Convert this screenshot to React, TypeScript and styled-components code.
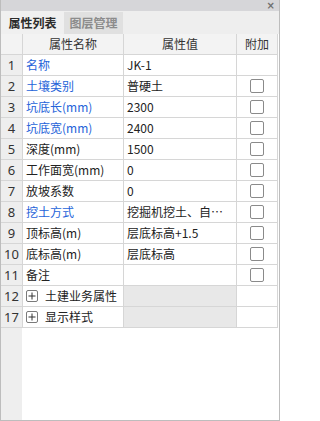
import React from "react";
import styled, { createGlobalStyle } from "styled-components";

const Global = createGlobalStyle`
  html, body { margin: 0; padding: 0; background: #ffffff; }
  body { font-family: "Noto Sans CJK SC", "Noto Sans", sans-serif; }
  * { box-sizing: border-box; }
`;

const Panel = styled.div`
  width: 280px;
  height: 421px;
  display: flex;
  flex-direction: column;
  background: #ffffff;
  border-left: 1px solid #bdbdbd;
  border-right: 1px solid #bdbdbd;
  border-bottom: 1px solid #bdbdbd;
  font-family: "Noto Sans CJK SC", "Noto Sans", sans-serif;
  font-size: 12px;
  overflow: hidden;
`;

const TitleBar = styled.div`
  height: 11px;
  flex: none;
  background: #d6d6d9;
  margin: 0 -1px;
  display: flex;
  justify-content: flex-end;
  align-items: center;
  padding-right: 5px;
`;

const Close = styled.span`
  font-family: "DejaVu Sans", sans-serif;
  font-size: 10px;
  line-height: 11px;
  color: #6f6f6f;
  font-weight: bold;
`;

const TabStrip = styled.div`
  height: 23px;
  flex: none;
  background: #eeeeee;
  display: flex;
  align-items: flex-end;
`;

const Tab = styled.div<{ $active?: boolean }>`
  height: ${(p) => (p.$active ? "23px" : "22px")};
  width: ${(p) => (p.$active ? "63px" : "59px")};
  display: flex;
  align-items: center;
  justify-content: center;
  font-size: 12px;
  font-weight: 600;
  line-height: 16px;
  color: ${(p) => (p.$active ? "#2b2b2b" : "#8c8c8c")};
  background: ${(p) => (p.$active ? "#f0f0f0" : "#e0e0e0")};
`;

const Grid = styled.div`
  flex: 1;
  display: grid;
  grid-template-columns: 22px 101px 113px 41px;
  grid-auto-rows: 21px;
  align-content: start;
  background: linear-gradient(to right, #eeeeee 0 21px, #ffffff 21px);
`;

const Cell = styled.div<{ $bg?: string; $center?: boolean; $color?: string }>`
  border-right: 1px solid #d6d6d6;
  border-bottom: 1px solid #d6d6d6;
  background: ${(p) => p.$bg || "#ffffff"};
  display: flex;
  align-items: center;
  justify-content: ${(p) => (p.$center ? "center" : "flex-start")};
  padding: ${(p) => (p.$center ? "0" : "0 3px")};
  color: ${(p) => p.$color || "#222222"};
  font-size: 12px;
  line-height: 16px;
  white-space: nowrap;
  min-width: 0;
`;

const HeadCell = styled(Cell)`
  background: #f3f3f3;
  color: #333333;
  justify-content: center;
`;

const NumCell = styled(Cell)`
  background: #eeeeee;
  color: #333333;
  justify-content: center;
  padding: 0;
  font-family: "Noto Sans", "Noto Sans CJK SC", sans-serif;
  font-size: 13px;
`;

const ValueText = styled.span`
  flex: 1;
  min-width: 0;
  overflow: hidden;
  text-overflow: ellipsis;
  white-space: nowrap;
`;

const Check = styled.span`
  width: 14px;
  height: 14px;
  border: 1px solid #8a8a8a;
  border-radius: 2px;
  background: #ffffff;
`;

const Expand = styled.span`
  width: 12px;
  height: 12px;
  border: 1px solid #7a7a7a;
  border-radius: 2px;
  display: flex;
  align-items: center;
  justify-content: center;
  margin-right: 7px;
  flex: none;
`;

const PlusIcon = () => (
  <svg width="8" height="8" viewBox="0 0 8 8">
    <path d="M0.5 4H7.5M4 0.5V7.5" stroke="#333" strokeWidth="1" />
  </svg>
);

type Row = {
  n: string;
  name: string;
  value: string;
  blue?: boolean;
  check?: boolean;
  group?: boolean;
};

const rows: Row[] = [
  { n: "1", name: "名称", value: "JK-1", blue: true },
  { n: "2", name: "土壤类别", value: "普硬土", blue: true, check: true },
  { n: "3", name: "坑底长(mm)", value: "2300", blue: true, check: true },
  { n: "4", name: "坑底宽(mm)", value: "2400", blue: true, check: true },
  { n: "5", name: "深度(mm)", value: "1500", check: true },
  { n: "6", name: "工作面宽(mm)", value: "0", check: true },
  { n: "7", name: "放坡系数", value: "0", check: true },
  { n: "8", name: "挖土方式", value: "挖掘机挖土、自卸汽车运土", blue: true, check: true },
  { n: "9", name: "顶标高(m)", value: "层底标高+1.5", check: true },
  { n: "10", name: "底标高(m)", value: "层底标高", check: true },
  { n: "11", name: "备注", value: "", check: true },
  { n: "12", name: "土建业务属性", value: "", group: true },
  { n: "17", name: "显示样式", value: "", group: true },
];

export default function App() {
  return (
    <>
      <Global />
      <Panel>
        <TitleBar>
          <Close>×</Close>
        </TitleBar>
        <TabStrip>
          <Tab $active>属性列表</Tab>
          <Tab>图层管理</Tab>
        </TabStrip>
        <Grid>
          <HeadCell />
          <HeadCell>属性名称</HeadCell>
          <HeadCell>属性值</HeadCell>
          <HeadCell>附加</HeadCell>
          {rows.map((r) => (
            <React.Fragment key={r.n}>
              <NumCell>{r.n}</NumCell>
              <Cell $color={r.blue ? "#2563d9" : "#222222"}>
                {r.group && (
                  <Expand>
                    <PlusIcon />
                  </Expand>
                )}
                {r.name}
              </Cell>
              <Cell $bg={r.group ? "#e8e8e8" : "#ffffff"}>
                <ValueText>{r.value}</ValueText>
              </Cell>
              <Cell $center>{r.check && <Check />}</Cell>
            </React.Fragment>
          ))}
        </Grid>
      </Panel>
    </>
  );
}
